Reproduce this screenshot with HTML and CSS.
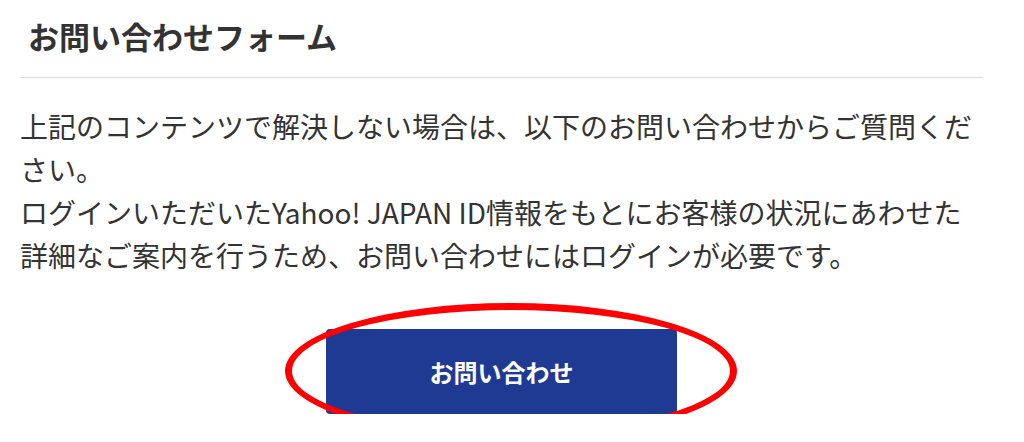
FILE: index.html
```html
<!DOCTYPE html>
<html lang="ja">
  <head>
    <meta charset="utf-8">
    <title>お問い合わせフォーム</title>
    <link rel="stylesheet" href="styles.css">
  </head>
  <body>
    <div class="section">
      <h2 class="section-title">お問い合わせフォーム</h2>
      <p class="lead">
        上記のコンテンツで解決しない場合は、以下のお問い合わせからご質問ください。<br>
        ログインいただいたYahoo! JAPAN ID情報をもとにお客様の状況にあわせた詳細なご案内を行うため、お問い合わせにはログインが必要です。
      </p>
      <div class="action">
        <div class="action-inner">
          <a class="contact-btn" href="#">お問い合わせ</a>
          <span class="mark"></span>
        </div>
      </div>
    </div>
  </body>
</html>
```

FILE: styles.css
```css
body {
  margin: 0;
  font-family: "Noto Sans CJK JP", "Noto Sans", sans-serif;
  color: #333;
  background: #fff;
}
.section {
  padding: 0 41px 0 20px;
}
.section-title {
  margin: 0;
  padding: 15px 8px 20px;
  font-size: 31px;
  line-height: 42px;
  font-weight: bold;
  border-bottom: 1px solid #ddd;
}
.lead {
  margin: 27px 0 0;
  font-size: 28px;
  line-height: 43px;
}
.action {
  display: flex;
  justify-content: center;
  margin-top: 52px;
}
.action-inner {
  position: relative;
}
.contact-btn {
  display: flex;
  align-items: center;
  justify-content: center;
  width: 351px;
  height: 85px;
  background: #1f3a93;
  color: #fff;
  font-size: 24px;
  font-weight: bold;
  text-decoration: none;
  border-radius: 4px;
}
/* red annotation circle */
.mark {
  position: absolute;
  left: -41px;
  top: -26px;
  width: 452px;
  height: 136px;
  box-sizing: border-box;
  border: 7px solid #f00;
  border-radius: 50%;
  pointer-events: none;
}
```
